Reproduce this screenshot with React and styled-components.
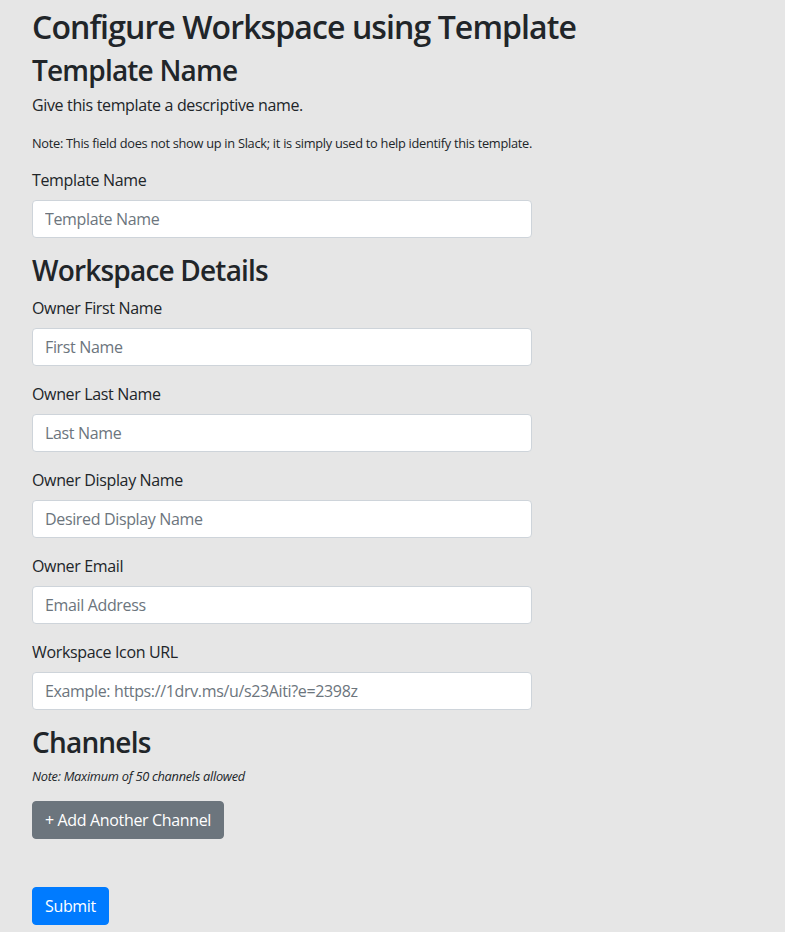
import React from "react";
import styled, { createGlobalStyle } from "styled-components";

const GlobalStyle = createGlobalStyle`
  html, body {
    margin: 0;
    padding: 0;
    background: #e6e6e6;
  }
  body {
    font-family: "Open Sans", "Noto Sans", sans-serif;
    color: #212529;
    font-size: 16px;
    line-height: 1.5;
    letter-spacing: -0.35px;
  }
  * { box-sizing: border-box; }
`;

const Page = styled.form`
  display: flex;
  flex-direction: column;
  align-items: flex-start;
  padding: 8px 32px 8px;
  min-height: 932px;
`;

const Title = styled.h2`
  margin: 0 0 8px;
  font-size: 32px;
  font-weight: 600;
  line-height: 1.2;
  letter-spacing: -0.9px;
`;

const Section = styled.h3`
  margin: 0 0 8px;
  font-size: 28px;
  font-weight: 600;
  line-height: 1.2;
  letter-spacing: -0.8px;
`;

const Lead = styled.p`
  margin: -3px 0 19px;
`;

const Note = styled.p`
  margin: ${(p) => p.$top || 0}px 0 ${(p) => p.$gap || 13}px;
  font-size: 12.8px;
  line-height: 1.5;
  letter-spacing: -0.28px;
  font-style: ${(p) => (p.$italic ? "italic" : "normal")};
`;

const Group = styled.div`
  display: flex;
  flex-direction: column;
  width: 500px;
  margin-bottom: 16px;
`;

const Label = styled.label`
  display: block;
  margin-bottom: 8px;
`;

const Field = styled.input`
  display: block;
  width: 100%;
  height: 38px;
  padding: 6px 12px;
  font: inherit;
  letter-spacing: inherit;
  color: #495057;
  background: #fff;
  border: 1px solid #ced4da;
  border-radius: 4px;
  outline: none;

  &::placeholder {
    color: #6c757d;
    opacity: 1;
  }
`;

const Button = styled.button`
  display: inline-block;
  height: 38px;
  padding: 6px 12px;
  font: inherit;
  letter-spacing: inherit;
  line-height: 1.5;
  color: #fff;
  background: ${(p) => (p.$primary ? "#007bff" : "#6c757d")};
  border: 1px solid ${(p) => (p.$primary ? "#007bff" : "#6c757d")};
  border-radius: 4px;
  margin-bottom: ${(p) => p.$gap || 0}px;
  cursor: pointer;
`;

const ownerFields = [
  { label: "Owner First Name", placeholder: "First Name" },
  { label: "Owner Last Name", placeholder: "Last Name" },
  { label: "Owner Display Name", placeholder: "Desired Display Name" },
  { label: "Owner Email", placeholder: "Email Address" },
  { label: "Workspace Icon URL", placeholder: "Example: https://1drv.ms/u/s23Aiti?e=2398z" },
];

export default function App() {
  return (
    <>
      <GlobalStyle />
      <Page onSubmit={(e) => e.preventDefault()}>
        <Title>Configure Workspace using Template</Title>
        <Section>Template Name</Section>
        <Lead>Give this template a descriptive name.</Lead>
        <Note $top={-2} $gap={15}>
          Note: This field does not show up in Slack; it is simply used to help identify this template.
        </Note>
        <Group>
          <Label>Template Name</Label>
          <Field placeholder="Template Name" />
        </Group>

        <Section>Workspace Details</Section>
        {ownerFields.map((f, i) => (
          <Group key={i}>
            <Label>{f.label}</Label>
            <Field placeholder={f.placeholder} />
          </Group>
        ))}

        <Section>Channels</Section>
        <Note $italic $gap={14}>Note: Maximum of 50 channels allowed</Note>
        <Button type="button" $gap={48}>+ Add Another Channel</Button>
        <Button type="submit" $primary>Submit</Button>
      </Page>
    </>
  );
}
